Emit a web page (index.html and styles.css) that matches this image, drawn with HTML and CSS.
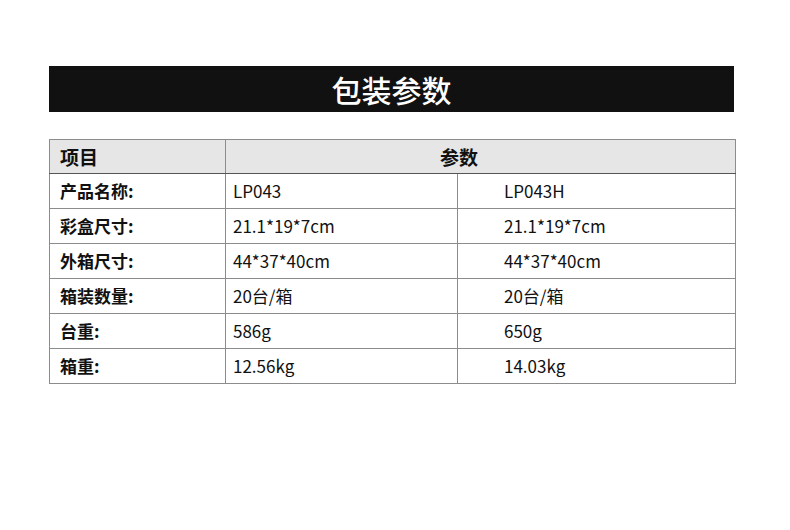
FILE: index.html
```html
<!DOCTYPE html>
<html lang="zh">
<head>
<meta charset="utf-8">
<link rel="stylesheet" href="styles.css">
</head>
<body>
<div class="page">
  <div class="banner">包装参数</div>
  <table class="spec">
    <colgroup>
      <col class="c1"><col class="c2"><col class="c3">
    </colgroup>
    <thead>
      <tr><th class="lab">项目</th><th class="param" colspan="2">参数</th></tr>
    </thead>
    <tbody>
      <tr><td class="lab">产品名称:</td><td class="v2">LP043</td><td class="v3">LP043H</td></tr>
      <tr><td class="lab">彩盒尺寸:</td><td class="v2">21.1*19*7cm</td><td class="v3">21.1*19*7cm</td></tr>
      <tr><td class="lab">外箱尺寸:</td><td class="v2">44*37*40cm</td><td class="v3">44*37*40cm</td></tr>
      <tr><td class="lab">箱装数量:</td><td class="v2">20台/箱</td><td class="v3">20台/箱</td></tr>
      <tr><td class="lab">台重:</td><td class="v2">586g</td><td class="v3">650g</td></tr>
      <tr><td class="lab">箱重:</td><td class="v2">12.56kg</td><td class="v3">14.03kg</td></tr>
    </tbody>
  </table>
</div>
</body>
</html>
```
FILE: styles.css
```css
html, body {
  margin: 0;
  padding: 0;
  background: #ffffff;
}
body {
  font-family: "Noto Sans CJK SC", "Noto Sans", sans-serif;
  color: #111111;
}
.page {
  padding: 66px 56px 0 49px;
}
.banner {
  height: 46px;
  background: #111111;
  color: #ffffff;
  font-size: 30px;
  font-weight: 500;
  line-height: 46px;
  text-align: center;
}
.spec {
  margin-top: 27px;
  width: 686px;
  border-collapse: collapse;
  table-layout: fixed;
  font-size: 17px;
}
.c1 { width: 176px; }
.c2 { width: 232px; }
.c3 { width: 278px; }
.spec th, .spec td {
  border: 1px solid #8c8c8c;
  height: 33px;
  padding: 0;
  line-height: 20px;
  text-align: left;
  vertical-align: middle;
}
.spec thead th {
  background: #e6e6e6;
  border-bottom: 1px solid #555555;
  font-size: 19px;
  font-weight: 700;
}
.spec .lab {
  padding-left: 10px;
  font-weight: 700;
}
.spec .param {
  padding-left: 214px;
}
.spec .v2 {
  padding-left: 7px;
  font-weight: 400;
}
.spec .v3 {
  padding-left: 46px;
  font-weight: 400;
}
.spec tbody td { height: 34px; }
```
